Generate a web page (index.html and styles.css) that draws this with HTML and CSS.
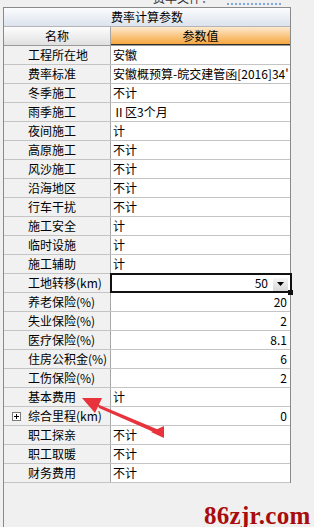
FILE: index.html
```html
<!DOCTYPE html>
<html lang="zh">
<head>
  <meta charset="UTF-8">
  <title>费率计算参数</title>
  <link rel="stylesheet" href="styles.css">
</head>
<body>
  <div class="topbar">
    <span class="top-label">费率文件：</span>
    <span class="top-link"></span>
  </div>

  <div class="panel">
    <div class="grid">
      <div class="title">费率计算参数</div>
      <div class="row head">
        <div class="name">名称</div>
        <div class="value">参数值</div>
      </div>

      <div class="row"><div class="name">工程所在地</div><div class="value">安徽</div></div>
      <div class="row"><div class="name">费率标准</div><div class="value">安徽概预算-皖交建管函[2016]34'</div></div>
      <div class="row"><div class="name">冬季施工</div><div class="value">不计</div></div>
      <div class="row"><div class="name">雨季施工</div><div class="value">Ⅱ区3个月</div></div>
      <div class="row"><div class="name">夜间施工</div><div class="value">计</div></div>
      <div class="row"><div class="name">高原施工</div><div class="value">不计</div></div>
      <div class="row"><div class="name">风沙施工</div><div class="value">不计</div></div>
      <div class="row"><div class="name">沿海地区</div><div class="value">不计</div></div>
      <div class="row"><div class="name">行车干扰</div><div class="value">不计</div></div>
      <div class="row"><div class="name">施工安全</div><div class="value">计</div></div>
      <div class="row"><div class="name">临时设施</div><div class="value">计</div></div>
      <div class="row"><div class="name">施工辅助</div><div class="value">计</div></div>
      <div class="row">
        <div class="name">工地转移(km)</div>
        <div class="value select">
          <span>50</span>
          <span class="dd">
            <svg width="7" height="4" viewBox="0 0 7 4"><path d="M0 0h7L3.5 4z" fill="#000"/></svg>
          </span>
        </div>
      </div>
      <div class="row"><div class="name">养老保险(%)</div><div class="value num">20</div></div>
      <div class="row"><div class="name">失业保险(%)</div><div class="value num">2</div></div>
      <div class="row"><div class="name">医疗保险(%)</div><div class="value num">8.1</div></div>
      <div class="row"><div class="name">住房公积金(%)</div><div class="value num">6</div></div>
      <div class="row"><div class="name">工伤保险(%)</div><div class="value num">2</div></div>
      <div class="row"><div class="name">基本费用</div><div class="value">计</div></div>
      <div class="row">
        <div class="name tree">
          <svg class="expander" width="9" height="9" viewBox="0 0 9 9">
            <rect x="0.5" y="0.5" width="8" height="8" fill="#fff" stroke="#7a7a7a"/>
            <path d="M2 4.5h5M4.5 2v5" stroke="#000"/>
          </svg>
          综合里程(km)
        </div>
        <div class="value num">0</div>
      </div>
      <div class="row"><div class="name">职工探亲</div><div class="value">不计</div></div>
      <div class="row"><div class="name">职工取暖</div><div class="value">不计</div></div>
      <div class="row"><div class="name">财务费用</div><div class="value">不计</div></div>
    </div>
  </div>

  <!-- annotation arrow -->
  <svg class="arrow" width="314" height="527" viewBox="0 0 314 527">
    <polygon points="82,398 102,398 95,413" fill="#e8333c"/>
    <polygon points="97,404 99,408 158,434 159,430" fill="#e8333c"/>
    <polygon points="151,432 164,426 164,438" fill="#e8333c"/>
  </svg>

  <div class="watermark">86zjr.com</div>
</body>
</html>
```

FILE: styles.css
```css
body {
  margin: 0;
  width: 314px;
  height: 527px;
  overflow: hidden;
  position: relative;
  background: #f0f0f0;
  font-family: "Noto Sans CJK SC", sans-serif;
  font-size: 12px;
  color: #000;
}

.topbar {
  height: 7px;
  overflow: hidden;
  display: flex;
  align-items: flex-start;
  gap: 14px;
  padding-left: 153px;
}

.top-label {
  margin-top: -9px;
  line-height: 14px;
  color: #333;
}

.top-link {
  width: 55px;
  height: 2px;
  margin-top: 3px;
  background: repeating-linear-gradient(90deg, #7ea6dc 0 2px, transparent 2px 4px);
}

.panel {
  margin-left: 3px;
  height: 520px;
  border-left: 1px solid #8a8a8a;
}

.grid {
  width: 286px;
  border-top: 1px solid #8a8a8a;
  border-right: 1px solid #8a8a8a;
}

.title {
  height: 18px;
  line-height: 18px;
  text-align: center;
  border-bottom: 1px solid #b4b4b4;
  background: linear-gradient(#fbfcfe, #dce3ed);
}

.row {
  display: flex;
  height: 18px;
  border-bottom: 1px solid #c4c4c4;
}

.name {
  width: 82px;
  padding-left: 24px;
  border-right: 1px solid #a6a6a6;
  background: #f1f1f1;
  line-height: 18px;
  white-space: nowrap;
}

.value {
  flex: 1;
  padding-left: 2px;
  line-height: 18px;
  white-space: nowrap;
  overflow: hidden;
  background: #fff;
}

.num {
  text-align: right;
  padding-right: 3px;
}

.head {
  border-bottom-color: #9a9a9a;
}

.head .name {
  width: 106px;
  padding-left: 0;
  text-align: center;
  background: linear-gradient(#fdfdfd, #e0e0e0);
}

.head .value {
  padding-left: 0;
  text-align: center;
  background: linear-gradient(#fde9cc, #f6a338);
  box-shadow: inset 0 -1px #2e2e2e;
}

.tree {
  display: flex;
  align-items: center;
  padding-left: 8px;
  width: 98px;
}

.expander {
  margin-right: 7px;
}

.select {
  position: relative;
  overflow: visible;
  display: flex;
  align-items: center;
  justify-content: flex-end;
  padding-right: 2px;
}

.select::after {
  content: "";
  position: absolute;
  left: -1px;
  top: -1px;
  right: -2px;
  bottom: -1px;
  border: 2px solid #111;
}

.select::before {
  content: "";
  position: absolute;
  right: -3px;
  bottom: -3px;
  width: 5px;
  height: 5px;
  background: #111;
}

.select span:first-child {
  margin-right: 5px;
}

.dd {
  width: 15px;
  height: 13px;
  margin-top: 2px;
  display: flex;
  align-items: center;
  justify-content: center;
  background: linear-gradient(#f6f6f6, #d8d8d8);
}

.arrow {
  position: absolute;
  left: 0;
  top: 0;
  pointer-events: none;
}

.watermark {
  position: absolute;
  left: 204px;
  top: 503px;
  font-family: "Liberation Serif", serif;
  font-weight: bold;
  font-size: 25px;
  line-height: 26px;
  letter-spacing: 0.3px;
  color: #a80c0c;
}
```
